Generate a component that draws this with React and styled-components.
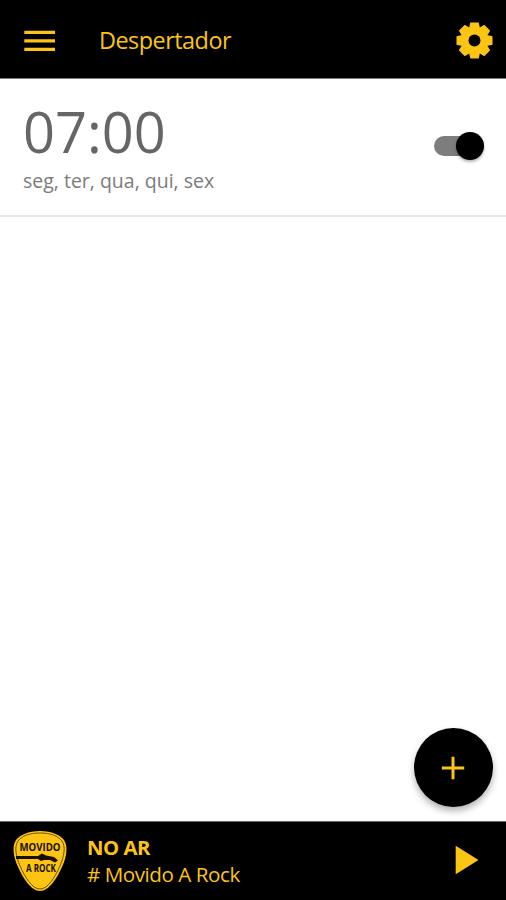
import React from 'react';
import styled, { createGlobalStyle } from 'styled-components';

const yellow = '#fdc513';

const GlobalStyle = createGlobalStyle`
  * { box-sizing: border-box; }
  body {
    margin: 0;
    background: #fff;
    font-family: "Open Sans", "Noto Sans", sans-serif;
  }
`;

const Screen = styled.div`
  width: 506px;
  height: 900px;
  display: flex;
  flex-direction: column;
  background: #fff;
  overflow: hidden;
`;

const Header = styled.header`
  height: 79px;
  flex: none;
  display: flex;
  align-items: center;
  padding: 3px 13px 0 24px;
  background: #000;
  border-bottom: 1px solid #777;
`;

const IconButton = styled.button`
  display: flex;
  flex: none;
  padding: 0;
  border: 0;
  background: none;
  color: ${yellow};
`;

const Title = styled.h1`
  flex: 1;
  margin: 0 0 2px 43px;
  color: ${yellow};
  font-size: 23.4px;
  line-height: 30px;
  font-weight: 400;
  letter-spacing: -0.5px;
`;

const Alarms = styled.main`
  flex: 1;
  display: flex;
  flex-direction: column;
`;

const AlarmRow = styled.section`
  height: 138px;
  display: flex;
  justify-content: space-between;
  padding: 0 22px 0 23px;
  border-bottom: 2px solid #e7e7e7;
`;

const AlarmText = styled.div`
  display: flex;
  flex-direction: column;
`;

const Time = styled.div`
  margin-top: 17px;
  color: #666;
  font-size: 56px;
  line-height: 70px;
`;

const Days = styled.div`
  margin-top: 2px;
  color: #7b7b7b;
  font-size: 19.5px;
  line-height: 26px;
`;

const Toggle = styled.div`
  display: flex;
  align-items: center;
  justify-content: flex-end;
  width: 50px;
  height: 20px;
  margin-top: 57px;
  border-radius: 10px;
  background: #7d7d7d;
`;

const Knob = styled.div`
  width: 28px;
  height: 28px;
  border-radius: 50%;
  background: #000;
  box-shadow: 0 2px 3px rgba(0, 0, 0, 0.3);
`;

const AddButton = styled.button`
  display: flex;
  align-items: center;
  justify-content: center;
  align-self: flex-end;
  width: 79px;
  height: 79px;
  margin: auto 13px 14px 0;
  padding: 0 1px 0 0;
  border: 0;
  border-radius: 50%;
  background: #000;
  color: ${yellow};
  box-shadow: 0 4px 7px rgba(0, 0, 0, 0.3);
`;

const Player = styled.footer`
  height: 79px;
  flex: none;
  display: flex;
  align-items: center;
  padding: 0 27px 2px 12px;
  border-top: 1px solid #666;
  background: #000;
`;

const NowPlaying = styled.div`
  flex: 1;
  display: flex;
  flex-direction: column;
  margin: 2px 0 0 19px;
  color: ${yellow};
`;

const Line = styled.span`
  font-size: ${(p) => p.$size}px;
  font-weight: ${(p) => p.$weight};
  line-height: 27px;
  letter-spacing: -0.45px;
`;

const Logo = styled.svg`
  flex: none;
  margin-top: 2px;
`;

const LogoText = styled.text`
  font-family: "Open Sans", sans-serif;
  font-weight: 700;
  fill: #171000;
`;

function Gear() {
  const tooth = 'M-5.8-11L-4.2-18H4.2L5.8-11Z';
  return (
    <svg width="37" height="37" viewBox="-18.5 -18.5 37 37" fill="currentColor">
      {[0, 45, 90, 135, 180, 225, 270, 315].map((a) => (
        <path key={a} d={tooth} transform={`rotate(${a})`} />
      ))}
      <circle r="13" />
      <circle r="6" fill="#000" />
    </svg>
  );
}

function PickLogo() {
  return (
    <Logo width="56" height="62" viewBox="0 0 56 62">
      <path
        d="M28 1C40 1 48 5 52 10C56 16 55 26 50 37C45 48 37 61 28 61C19 61 11 48 6 37C1 26 0 16 4 10C8 5 16 1 28 1Z"
        fill={yellow}
      />
      <path
        d="M28 3C39 3 46 6 50 11C54 17 52 26 48 36C43 47 36 59 28 59C20 59 13 47 8 36C4 26 2 17 6 11C10 6 17 3 28 3Z"
        fill="none"
        stroke="#4a3900"
        strokeWidth=".8"
      />
      <LogoText x="7.5" y="21" fontSize="10" textLength="41" lengthAdjust="spacingAndGlyphs">MOVIDO</LogoText>
      <path d="M4 26H26L30 23.5L34 25.5L42 27L46 30.5L43 32.5L38 30L32 30L29 31L26 29H4Z" fill="#171000" />
      <LogoText x="14" y="41.5" fontSize="10" textLength="30" lengthAdjust="spacingAndGlyphs">A ROCK</LogoText>
    </Logo>
  );
}

export default function App() {
  return (
    <Screen>
      <GlobalStyle />
      <Header>
        <IconButton aria-label="Menu">
          <svg width="32" height="24" viewBox="0 0 32 24" fill="currentColor">
            <path d="M.3 1.7H31V5.1H.3ZM.3 10.3H31V13.6H.3ZM.3 18.7H31V22.1H.3Z" />
          </svg>
        </IconButton>
        <Title>Despertador</Title>
        <IconButton aria-label="Configurações"><Gear /></IconButton>
      </Header>
      <Alarms>
        <AlarmRow>
          <AlarmText>
            <Time>07:00</Time>
            <Days>seg, ter, qua, qui, sex</Days>
          </AlarmText>
          <Toggle role="switch" aria-checked="true"><Knob /></Toggle>
        </AlarmRow>
        <AddButton aria-label="Adicionar">
          <svg width="24" height="24" viewBox="0 0 24 24" stroke="currentColor" strokeWidth="3">
            <path d="M12 .8V23.2M.8 12H23.2" />
          </svg>
        </AddButton>
      </Alarms>
      <Player>
        <PickLogo />
        <NowPlaying>
          <Line $size={20.3} $weight={700}>NO AR</Line>
          <Line $size={20.6} $weight={400}># Movido A Rock</Line>
        </NowPlaying>
        <IconButton aria-label="Tocar">
          <svg width="24" height="30" viewBox="0 0 24 30" fill="currentColor">
            <path d="M.7 .7L23.5 15L.7 29.3Z" />
          </svg>
        </IconButton>
      </Player>
    </Screen>
  );
}
